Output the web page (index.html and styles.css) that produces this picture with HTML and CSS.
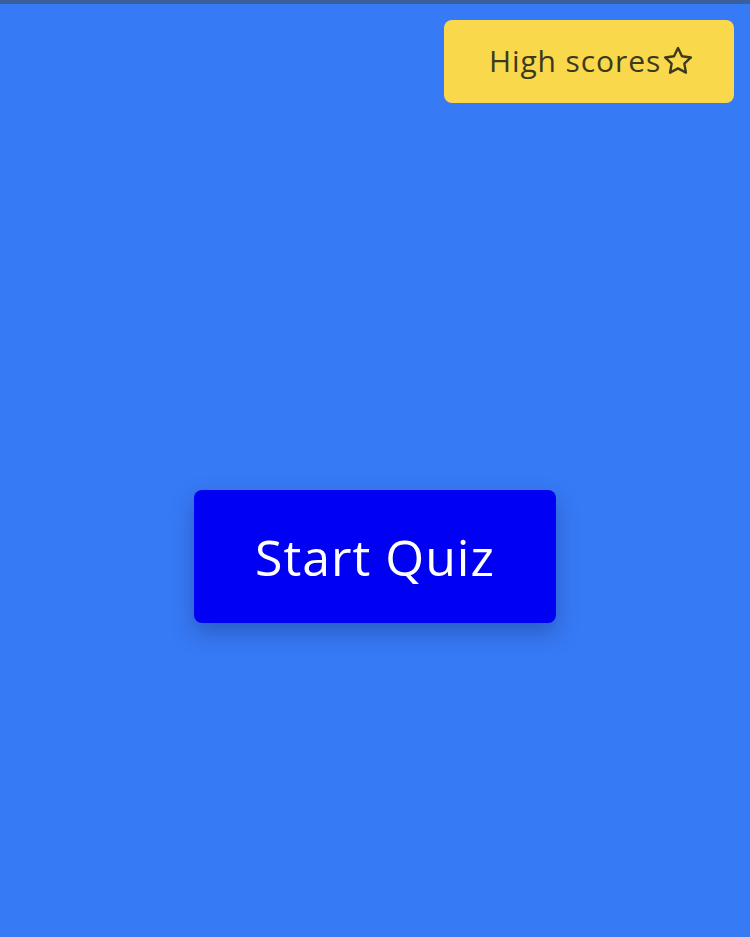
FILE: index.html
```html
<!DOCTYPE html>
<html lang="en">
<head>
<meta charset="utf-8">
<title>Quiz</title>
<link rel="stylesheet" href="styles.css">
</head>
<body>
<div class="topline"></div>
<header class="topbar">
  <button class="scores-btn" type="button">
    <span class="scores-label">High scores</span>
    <svg class="star" viewBox="0 0 24 24" width="34" height="34" aria-hidden="true">
      <path d="M12 2.8l2.8 5.8 6.3.9-4.6 4.4 1.1 6.3L12 17.2l-5.6 3 1.1-6.3-4.6-4.4 6.3-.9z" fill="none" stroke="currentColor" stroke-width="1.7" stroke-linejoin="round"/>
    </svg>
  </button>
</header>
<main class="main">
  <button class="start-btn" type="button">Start Quiz</button>
</main>
</body>
</html>
```
FILE: styles.css
```css
html, body {
  margin: 0;
  padding: 0;
}
body {
  background: #377af5;
  min-height: 937px;
  font-family: "Open Sans", "Noto Sans", sans-serif;
}
.topline {
  height: 4px;
  background: #3a5f9b;
}
.topbar {
  display: flex;
  justify-content: flex-end;
  padding: 16px 16px 0 0;
}
.scores-btn {
  display: flex;
  align-items: center;
  justify-content: center;
  width: 290px;
  height: 83px;
  border: none;
  border-radius: 8px;
  background: #f9d84c;
  color: #3d3a1c;
  font-family: inherit;
  font-size: 30px;
  font-weight: 500;
  padding: 0 0 2px 6px;
}
.scores-label {
  letter-spacing: 0.9px;
}
.star {
  display: block;
}
.main {
  display: flex;
  justify-content: center;
  padding-top: 387px;
}
.start-btn {
  width: 362px;
  height: 133px;
  border: none;
  border-radius: 8px;
  background: #0000f2;
  color: #ffffff;
  font-family: inherit;
  font-size: 50px;
  font-weight: 500;
  letter-spacing: 1px;
  box-shadow: 0 10px 22px rgba(20, 40, 110, 0.35);
}
```
